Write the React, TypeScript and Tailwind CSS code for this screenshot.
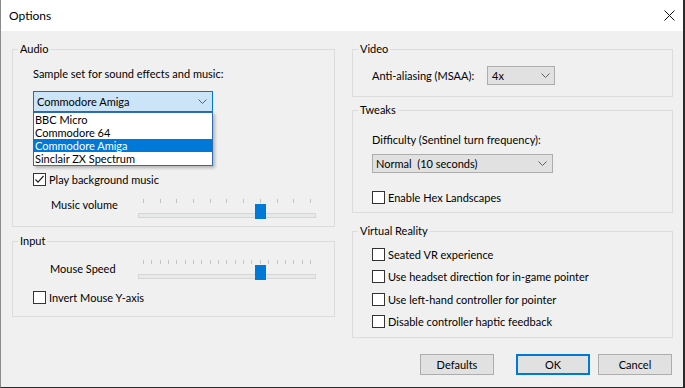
import type { ReactNode } from "react";

function Chevron() {
  return (
    <svg width="9" height="5" viewBox="0 0 9 5" className="shrink-0">
      <polyline points="0.5,0.5 4.5,4.5 8.5,0.5" fill="none" stroke="#606060" strokeWidth="1" />
    </svg>
  );
}

function Checkbox({ checked = false, label }: { checked?: boolean; label: string }) {
  return (
    <label className="flex h-[15px] items-center gap-[3px] leading-[15px]">
      <span className="flex h-[13px] w-[13px] items-center justify-center border border-[#333333] bg-white">
        {checked && (
          <svg width="11" height="11" viewBox="0 0 11 11">
            <polyline points="1.5,5.5 4,8.2 9.5,2" fill="none" stroke="#222222" strokeWidth="1.2" />
          </svg>
        )}
      </span>
      <span>{label}</span>
    </label>
  );
}

function Group({ title, className, children }: { title: string; className: string; children: ReactNode }) {
  return (
    <fieldset className={"border border-[#dcdcdc] " + className}>
      <legend className="ml-[5px] px-[2px] leading-[14px]">{title}</legend>
      {children}
    </fieldset>
  );
}

// trackbar: ticks spread from 7px to 175px, thumb sits on the chosen tick
function Slider({ ticks, value }: { ticks: number; value: number }) {
  const thumbLeft = 7 + (167 * value) / (ticks - 1) - 5;
  return (
    <div className="relative h-[22px] w-[182px]">
      <div className="flex justify-between px-[7px] pt-[2px]">
        {Array.from({ length: ticks }).map((_, i) => (
          <span key={i} className="h-[4px] w-px bg-[#c4c4c4]" />
        ))}
      </div>
      <div className="mx-[2px] mt-[10px] h-[5px] border border-[#d6d6d6] bg-[#e7eaea]" />
      <div className="absolute top-[7px] h-[15px] w-[11px] bg-[#0078d7]" style={{ left: thumbLeft }} />
    </div>
  );
}

function Button({ label, primary = false }: { label: string; primary?: boolean }) {
  return (
    <button
      className={
        primary
          ? "h-[21px] w-[74px] border-2 border-[#0078d7] bg-[#e1e1e1] leading-[15px]"
          : "h-[21px] w-[74px] border border-[#adadad] bg-[#e1e1e1] leading-[15px]"
      }
    >
      {label}
    </button>
  );
}

const samples = ["BBC Micro", "Commodore 64", "Commodore Amiga", "Sinclair ZX Spectrum"];

export default function App() {
  return (
    <div className="flex h-[388px] w-[685px] flex-col border-b border-l border-r-2 border-b-[#2b2b2b] border-l-[#8a8a8a] border-r-[#2b2b2b] bg-[#f0f0f0] font-['Lato',sans-serif] text-[11px] leading-[15px] text-black">
      {/* title bar */}
      <div className="flex h-[31px] shrink-0 items-center justify-between bg-white pl-[8px] pr-[8px] text-[12px]">
        <span>Options</span>
        <svg width="11" height="11" viewBox="0 0 11 11">
          <path d="M0.5 0.5 L10.5 10.5 M10.5 0.5 L0.5 10.5" stroke="#111111" strokeWidth="1" />
        </svg>
      </div>

      <div className="flex flex-1 flex-col pl-[11px] pr-[10px]">
        <div className="mt-[11px] flex items-start gap-[17px]">
          {/* left column */}
          <div className="flex w-[323px] flex-col">
            <Group title="Audio" className="">
              <div className="pb-[7px] pl-[20px] pt-[10px]">
                <div>Sample set for sound effects and music:</div>
                <div className="relative mt-[10px] w-[180px]">
                  <div className="flex h-[21px] items-center justify-between border border-[#0078d7] bg-[#cce4f7] pl-[3px] pr-[5px]">
                    <span>Commodore Amiga</span>
                    <Chevron />
                  </div>
                  <ul className="absolute left-0 top-full z-10 w-full border border-[#2f6db0] bg-white shadow-[2px_2px_3px_rgba(0,0,0,0.25)]">
                    {samples.map((s) => (
                      <li
                        key={s}
                        className={
                          s === "Commodore Amiga"
                            ? "h-[13px] bg-[#0078d7] pl-[1px] leading-[13px] text-white"
                            : "h-[13px] pl-[1px] leading-[13px]"
                        }
                      >
                        {s}
                      </li>
                    ))}
                  </ul>
                </div>
                <div className="mt-[60px]">
                  <Checkbox checked label="Play background music" />
                </div>
                <div className="mt-[10px] flex">
                  <div className="w-[103px] pl-[18px]">Music volume</div>
                  <Slider ticks={11} value={7} />
                </div>
              </div>
            </Group>

            <Group title="Input" className="mt-[7px]">
              <div className="pb-[11px] pl-[20px] pt-[10px]">
                <div className="flex">
                  <div className="w-[103px] pl-[17px] pt-[3px]">Mouse Speed</div>
                  <Slider ticks={21} value={14} />
                </div>
                <div className="mt-[10px]">
                  <Checkbox label="Invert Mouse Y-axis" />
                </div>
              </div>
            </Group>
          </div>

          {/* right column */}
          <div className="flex w-[321px] flex-col">
            <Group title="Video" className="">
              <div className="pb-[11px] pl-[19px] pt-[10px]">
                <div className="flex h-[19px] items-center">
                  <span className="w-[115px]">Anti-aliasing (MSAA):</span>
                  <div className="flex h-[19px] w-[68px] items-center justify-between border border-[#adadad] bg-[#e1e1e1] pl-[4px] pr-[4px]">
                    <span>4x</span>
                    <Chevron />
                  </div>
                </div>
              </div>
            </Group>

            <Group title="Tweaks" className="mt-[6px]">
              <div className="pb-[7px] pl-[19px] pt-[15px]">
                <div>Difficulty (Sentinel turn frequency):</div>
                <div className="mt-[7px] flex h-[19px] w-[181px] items-center justify-between border border-[#adadad] bg-[#e1e1e1] pl-[3px] pr-[5px]">
                  <span className="whitespace-pre">Normal  (10 seconds)</span>
                  <Chevron />
                </div>
                <div className="mt-[17px]">
                  <Checkbox label="Enable Hex Landscapes" />
                </div>
              </div>
            </Group>

            <Group title="Virtual Reality" className="mt-[11px]">
              <div className="flex flex-col pb-[8px] pl-[19px] pt-[9px]">
                <Checkbox label="Seated VR experience" />
                <div className="mt-[7px]">
                  <Checkbox label="Use headset direction for in-game pointer" />
                </div>
                <div className="mt-[8px]">
                  <Checkbox label="Use left-hand controller for pointer" />
                </div>
                <div className="mt-[7px]">
                  <Checkbox label="Disable controller haptic feedback" />
                </div>
              </div>
            </Group>
          </div>
        </div>

        {/* dialog buttons */}
        <div className="mt-[16px] flex justify-end pr-[1px]">
          <Button label="Defaults" />
          <div className="ml-[22px]">
            <Button label="OK" primary />
          </div>
          <div className="ml-[8px]">
            <Button label="Cancel" />
          </div>
        </div>
      </div>
    </div>
  );
}
